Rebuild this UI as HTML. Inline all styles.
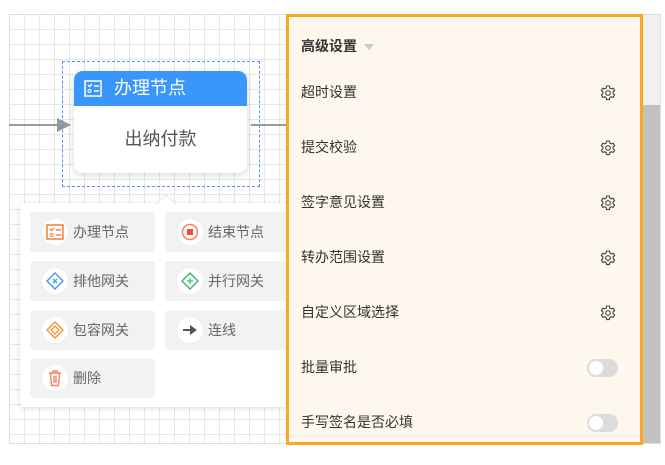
<!DOCTYPE html>
<html><head><meta charset="utf-8"><style>
*{margin:0;padding:0;box-sizing:border-box}
body{width:665px;height:465px;background:#fff;position:relative;overflow:hidden;font-family:"Liberation Sans","Noto Sans CJK SC",sans-serif}
.canvas{position:absolute;left:9px;top:14px;width:652px;height:430px;border:1px solid #ddd;
background-color:#fff;background-image:linear-gradient(#e6e6e6 1px,transparent 1px),linear-gradient(90deg,#e6e6e6 1px,transparent 1px);background-size:15px 15px;background-position:-1px -1px}
.abs{position:absolute}
.dash{left:62px;top:61px;width:198px;height:126px;border:1px dashed #5b8ff9}
.card{left:74px;top:71px;width:173px;height:102px;background:#fff;border-radius:9px;box-shadow:0 2px 8px rgba(0,0,0,.15);overflow:hidden}
.card .hd{height:35px;background:#3a96fb;color:#fff;font-size:18px;line-height:35px;padding-left:40px;position:relative}
.card .bd{text-align:center;font-size:18px;color:#555;line-height:66px}
.menu{left:20px;top:203px;width:280px;height:204px;background:#fff;border-radius:5px;box-shadow:0 1px 6px rgba(0,0,0,.15)}
.it{position:absolute;width:125px;height:40px;background:#f2f2f2;border-radius:4px;font-size:14px;color:#666;line-height:40px;padding-left:43px}
.ic{position:absolute;left:11px;top:6px;width:28px;height:28px;border-radius:50%;background:#fff;border:1px solid #eee}
.ic svg{position:absolute;left:4px;top:4px}
.panel{left:286px;top:14px;width:357px;height:431px;border:3px solid #f9a825;background:#fef7ee}
.row{position:absolute;left:12px;font-size:14px;color:#333}
.gear{position:absolute;left:311px}
.tog{position:absolute;left:298px;width:31px;height:18px;border-radius:9px;background:#dcdcdc}
.tog:after{content:"";position:absolute;left:2px;top:2px;width:14px;height:14px;border-radius:50%;background:#fff}
</style></head><body>
<div class="canvas"></div>
<div class="abs" style="left:9px;top:124px;width:50px;height:2px;background:#999"></div>
<svg class="abs" style="left:56px;top:117px" width="16" height="16"><path d="M1 1 L15 8 L1 15Z" fill="#999"/></svg>
<div class="abs" style="left:251px;top:124px;width:36px;height:2px;background:#999"></div>
<div class="abs dash"></div>
<div class="abs card"><div class="hd"><svg style="position:absolute;left:10px;top:9px" width="18" height="17" viewBox="0 0 18 17"><rect x="1" y="1" width="16" height="15" fill="none" stroke="#fff" stroke-width="1.5"/><path d="M4 5l1.5 1.5L8 4M10 6h5M10 11h5" stroke="#fff" stroke-width="1.5" fill="none"/><circle cx="5.5" cy="11" r="1.5" fill="none" stroke="#fff"/></svg>办理节点</div><div class="bd">出纳付款</div></div>
<div class="abs menu">
<svg class="abs" style="left:136px;top:-8px" width="20" height="9"><path d="M0 9L10 0L20 9Z" fill="#fff"/><path d="M0 9L10 0L20 9" fill="none" stroke="#e5e5e5"/></svg>
<div class="it" style="left:10px;top:9px"><div class="ic"><svg width="18" height="18"><rect x="1" y="2" width="16" height="14" fill="none" stroke="#f7843f" stroke-width="1.6"/><path d="M4 6l1.5 1.5L8 5M10 7h5M10 12h5" stroke="#f7843f" stroke-width="1.5" fill="none"/><circle cx="5.5" cy="12" r="1.5" fill="none" stroke="#f7843f"/></svg></div>办理节点</div>
<div class="it" style="left:145px;top:9px"><div class="ic"><svg width="18" height="18"><circle cx="9" cy="9" r="7.5" fill="none" stroke="#f7815f" stroke-width="1.5"/><rect x="6" y="6" width="6" height="6" fill="#f2493c"/></svg></div>结束节点</div>
<div class="it" style="left:10px;top:58px"><div class="ic"><svg width="18" height="18"><path d="M9 1L17 9L9 17L1 9Z" fill="none" stroke="#4e9bfb" stroke-width="1.5"/><path d="M7 7l4 4M11 7l-4 4" stroke="#4e9bfb" stroke-width="1.3"/></svg></div>排他网关</div>
<div class="it" style="left:145px;top:58px"><div class="ic"><svg width="18" height="18"><path d="M9 1L17 9L9 17L1 9Z" fill="none" stroke="#3bb87a" stroke-width="1.5"/><path d="M9 6v6M6 9h6" stroke="#3bb87a" stroke-width="1.3"/></svg></div>并行网关</div>
<div class="it" style="left:10px;top:107px"><div class="ic"><svg width="18" height="18"><path d="M9 1L17 9L9 17L1 9Z" fill="none" stroke="#f7953f" stroke-width="1.5"/><path d="M9 5L13 9L9 13L5 9Z" fill="none" stroke="#f7953f" stroke-width="1.4"/></svg></div>包容网关</div>
<div class="it" style="left:145px;top:107px"><div class="ic"><svg width="18" height="18"><path d="M2 9h8" stroke="#555" stroke-width="2"/><path d="M9 4L16 9L9 14Z" fill="#555"/></svg></div>连线</div>
<div class="it" style="left:10px;top:155px"><div class="ic"><svg width="18" height="18"><path d="M3 4h12M7 4V2h4v2M4.5 4.5l1 12h7l1-12M8 7v7M10 7v7" fill="none" stroke="#f7815f" stroke-width="1.4"/></svg></div>删除</div>
</div>
<div class="abs panel">
<div class="row" style="top:19px;font-weight:bold">高级设置 <svg width="10" height="8" style="margin-left:3px"><path d="M0 1h10L5 7Z" fill="#ccc"/></svg></div>
<div class="row" style="top:65px">超时设置</div>
<div class="row" style="top:120px">提交校验</div>
<div class="row" style="top:175px">签字意见设置</div>
<div class="row" style="top:230px">转办范围设置</div>
<div class="row" style="top:285px">自定义区域选择</div>
<div class="row" style="top:340px">批量审批</div>
<div class="row" style="top:395px">手写签名是否必填</div>
<svg class="gear" style="top:68px" width="16" height="16" viewBox="0 0 16 16"><path d="M6.6 1h2.8l.4 2 1.5.9 1.9-.7 1.4 2.4-1.5 1.3v1.8l1.5 1.3-1.4 2.4-1.9-.7-1.5.9-.4 2H6.6l-.4-2-1.5-.9-1.9.7-1.4-2.4 1.5-1.3V6.9L1.4 5.6l1.4-2.4 1.9.7 1.5-.9Z" fill="none" stroke="#444" stroke-width="1.1"/><circle cx="8" cy="8" r="2.3" fill="none" stroke="#444" stroke-width="1.1"/></svg>
<svg class="gear" style="top:123px" width="16" height="16" viewBox="0 0 16 16"><path d="M6.6 1h2.8l.4 2 1.5.9 1.9-.7 1.4 2.4-1.5 1.3v1.8l1.5 1.3-1.4 2.4-1.9-.7-1.5.9-.4 2H6.6l-.4-2-1.5-.9-1.9.7-1.4-2.4 1.5-1.3V6.9L1.4 5.6l1.4-2.4 1.9.7 1.5-.9Z" fill="none" stroke="#444" stroke-width="1.1"/><circle cx="8" cy="8" r="2.3" fill="none" stroke="#444" stroke-width="1.1"/></svg>
<svg class="gear" style="top:178px" width="16" height="16" viewBox="0 0 16 16"><path d="M6.6 1h2.8l.4 2 1.5.9 1.9-.7 1.4 2.4-1.5 1.3v1.8l1.5 1.3-1.4 2.4-1.9-.7-1.5.9-.4 2H6.6l-.4-2-1.5-.9-1.9.7-1.4-2.4 1.5-1.3V6.9L1.4 5.6l1.4-2.4 1.9.7 1.5-.9Z" fill="none" stroke="#444" stroke-width="1.1"/><circle cx="8" cy="8" r="2.3" fill="none" stroke="#444" stroke-width="1.1"/></svg>
<svg class="gear" style="top:233px" width="16" height="16" viewBox="0 0 16 16"><path d="M6.6 1h2.8l.4 2 1.5.9 1.9-.7 1.4 2.4-1.5 1.3v1.8l1.5 1.3-1.4 2.4-1.9-.7-1.5.9-.4 2H6.6l-.4-2-1.5-.9-1.9.7-1.4-2.4 1.5-1.3V6.9L1.4 5.6l1.4-2.4 1.9.7 1.5-.9Z" fill="none" stroke="#444" stroke-width="1.1"/><circle cx="8" cy="8" r="2.3" fill="none" stroke="#444" stroke-width="1.1"/></svg>
<svg class="gear" style="top:288px" width="16" height="16" viewBox="0 0 16 16"><path d="M6.6 1h2.8l.4 2 1.5.9 1.9-.7 1.4 2.4-1.5 1.3v1.8l1.5 1.3-1.4 2.4-1.9-.7-1.5.9-.4 2H6.6l-.4-2-1.5-.9-1.9.7-1.4-2.4 1.5-1.3V6.9L1.4 5.6l1.4-2.4 1.9.7 1.5-.9Z" fill="none" stroke="#444" stroke-width="1.1"/><circle cx="8" cy="8" r="2.3" fill="none" stroke="#444" stroke-width="1.1"/></svg>
<div class="tog" style="top:342px"></div>
<div class="tog" style="top:397px"></div>
</div>
<div class="abs" style="left:643px;top:15px;width:17px;height:90px;background:#f0f0f0"></div>
<div class="abs" style="left:643px;top:105px;width:17px;height:338px;background:#c1c1c1"></div>
</body></html>
